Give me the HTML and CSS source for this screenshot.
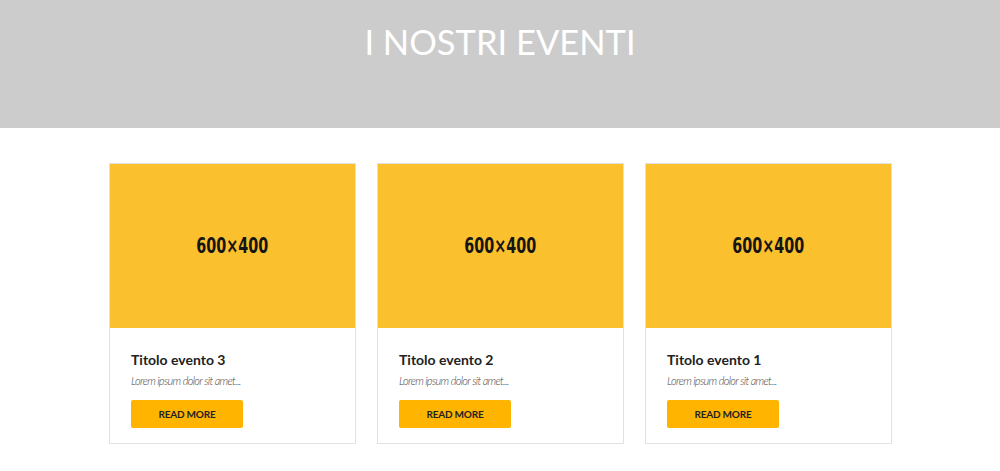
FILE: index.html
```html
<!DOCTYPE html>
<html lang="it">
<head>
<meta charset="utf-8">
<title>I nostri eventi</title>
<link rel="stylesheet" href="styles.css">
</head>
<body>
<header class="hero">
  <h1 class="hero-title">I NOSTRI EVENTI</h1>
</header>
<main class="events">
  <article class="card">
    <div class="card-img"><span>600×400</span></div>
    <div class="card-body">
      <h2 class="card-title">Titolo evento 3</h2>
      <p class="card-text">Lorem ipsum dolor sit amet...</p>
      <a class="btn" href="#">READ MORE</a>
    </div>
  </article>
  <article class="card">
    <div class="card-img"><span>600×400</span></div>
    <div class="card-body">
      <h2 class="card-title">Titolo evento 2</h2>
      <p class="card-text">Lorem ipsum dolor sit amet...</p>
      <a class="btn" href="#">READ MORE</a>
    </div>
  </article>
  <article class="card">
    <div class="card-img"><span>600×400</span></div>
    <div class="card-body">
      <h2 class="card-title">Titolo evento 1</h2>
      <p class="card-text">Lorem ipsum dolor sit amet...</p>
      <a class="btn" href="#">READ MORE</a>
    </div>
  </article>
</main>
</body>
</html>
```
FILE: styles.css
```css
* { box-sizing: border-box; }

body {
  margin: 0;
  font-family: Lato, "Open Sans", sans-serif;
  background: #fff;
  color: #222;
}

.hero {
  height: 128px;
  background: #cccccc;
  padding-top: 21px;
}

.hero-title {
  margin: 0;
  text-align: center;
  color: #fff;
  font-weight: 400;
  font-size: 34.5px;
  line-height: 1.2;
}

.events {
  display: flex;
  justify-content: center;
  gap: 21px;
  padding: 35px 0 0 1px;
}

.card {
  width: 247px;
  border: 1px solid #e2e2e2;
  background: #fff;
}

.card-img {
  height: 164px;
  background: #fbc02d;
  display: flex;
  align-items: center;
  justify-content: center;
}

/* placeholder label, drawn condensed */
.card-img span {
  font-family: "DejaVu Sans Condensed", "DejaVu Sans", sans-serif;
  font-weight: 700;
  font-size: 21px;
  color: #151515;
  display: inline-block;
  transform: scaleX(0.76);
}

.card-body {
  padding: 23px 21px 15px;
}

.card-title {
  margin: 0 0 5px;
  font-size: 14px;
  font-weight: 700;
  line-height: 18px;
  color: #222;
}

.card-text {
  margin: 0 0 13px;
  font-size: 11px;
  font-style: italic;
  font-weight: 300;
  line-height: 13px;
  letter-spacing: -0.65px;
  color: #444;
}

.btn {
  display: flex;
  align-items: center;
  justify-content: center;
  width: 112px;
  height: 28px;
  background: #ffb400;
  border-radius: 2px;
  color: #222;
  font-size: 10px;
  font-weight: 700;
  letter-spacing: -0.2px;
  text-decoration: none;
}
```
